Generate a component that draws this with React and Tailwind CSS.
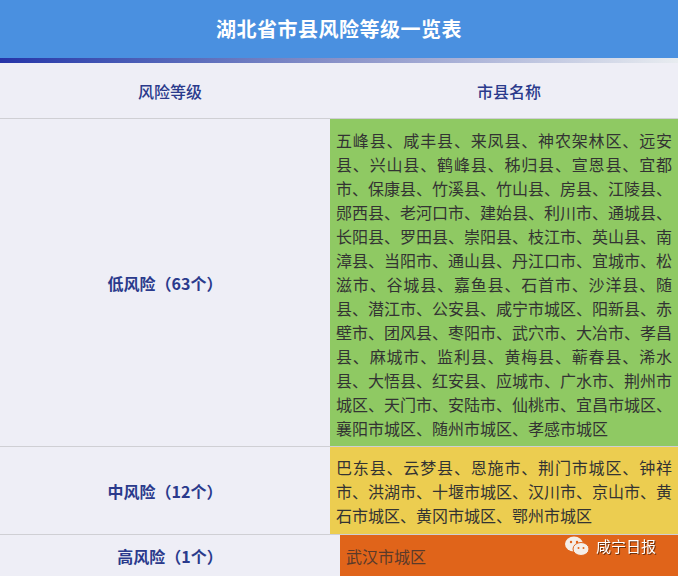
const lowLines = [
    '五峰县、咸丰县、来凤县、神农架林区、远安',
    '县、兴山县、鹤峰县、秭归县、宣恩县、宜都',
    '市、保康县、竹溪县、竹山县、房县、江陵县、',
    '郧西县、老河口市、建始县、利川市、通城县、',
    '长阳县、罗田县、崇阳县、枝江市、英山县、南',
    '漳县、当阳市、通山县、丹江口市、宜城市、松',
    '滋市、谷城县、嘉鱼县、石首市、沙洋县、随',
    '县、潜江市、公安县、咸宁市城区、阳新县、赤',
    '壁市、团风县、枣阳市、武穴市、大冶市、孝昌',
    '县、麻城市、监利县、黄梅县、蕲春县、浠水',
    '县、大悟县、红安县、应城市、广水市、荆州市',
    '城区、天门市、安陆市、仙桃市、宜昌市城区、',
    '襄阳市城区、随州市城区、孝感市城区',
]

const midLines = [
    '巴东县、云梦县、恩施市、荆门市城区、钟祥',
    '市、洪湖市、十堰市城区、汉川市、京山市、黄',
    '石市城区、黄冈市城区、鄂州市城区',
]

function Lines({ lines }) {
    return lines.map((line, i) => (
        <div
            key={i}
            className={`whitespace-nowrap ${i < lines.length - 1 ? 'text-justify [text-align-last:justify]' : ''}`}
        >
            {line}
        </div>
    ))
}

export default function App() {
    const font = { fontFamily: '"Noto Sans CJK SC", sans-serif' }
    return (
        <div className="w-[678px] h-[576px] overflow-hidden bg-white" style={font}>
            <div className="h-[58px] bg-[#4a90e0] flex items-center justify-center text-white text-[20px] font-bold tracking-wide">
                湖北省市县风险等级一览表
            </div>
            <div className="h-[5px] bg-gradient-to-r from-[#2633a8] via-[#8a92c8] to-[#e8ecf0]" />
            <div className="flex h-[56px] bg-[#eeeef6] border-b border-[#cfcfd4] text-[#2a3a8c] text-[16px] font-medium">
                <div className="w-[340px] flex items-center justify-center">风险等级</div>
                <div className="flex-1 flex items-center justify-center">市县名称</div>
            </div>
            <div className="flex h-[328px] border-b border-[#cfcfd4]">
                <div className="w-[340px] bg-[#eeeef6] flex items-center justify-center text-[#2a3a8c] text-[16px] font-bold">低风险（63个）</div>
                <div className="flex-1 bg-[#8fc963] px-[6px] pt-[9px] text-[16px] leading-[24px] text-[#333]">
                    <Lines lines={lowLines} />
                </div>
            </div>
            <div className="flex h-[88px] border-b border-[#cfcfd4]">
                <div className="w-[340px] bg-[#eeeef6] flex items-center justify-center text-[#2a3a8c] text-[16px] font-bold">中风险（12个）</div>
                <div className="flex-1 bg-[#eccd50] px-[6px] pt-[8px] text-[16px] leading-[24px] text-[#333]">
                    <Lines lines={midLines} />
                </div>
            </div>
            <div className="flex h-[41px]">
                <div className="w-[340px] bg-[#eeeef6] flex items-center justify-center text-[#2a3a8c] text-[16px] font-bold">高风险（1个）</div>
                <div className="relative flex-1 bg-[#e0641a] px-[6px] flex items-center text-[16px] text-[#5a3a2a]">
                    武汉市城区
                    <div className="absolute right-[22px] top-[0px] flex items-center gap-[6px] text-white text-[15px]">
                        <svg width="26" height="22" viewBox="0 0 26 22">
                            <ellipse cx="10" cy="9" rx="9" ry="7.5" fill="#f5eee8" />
                            <ellipse cx="17" cy="14" rx="8" ry="6.5" fill="#f5eee8" stroke="#e0641a" strokeWidth="1" />
                            <circle cx="7" cy="7" r="1.2" fill="#e0641a" />
                            <circle cx="13" cy="7" r="1.2" fill="#e0641a" />
                            <circle cx="14.5" cy="13" r="1" fill="#e0641a" />
                            <circle cx="19.5" cy="13" r="1" fill="#e0641a" />
                        </svg>
                        <span className="drop-shadow-[1px_1px_0_rgba(0,0,0,0.5)]">咸宁日报</span>
                    </div>
                </div>
            </div>
        </div>
    )
}
